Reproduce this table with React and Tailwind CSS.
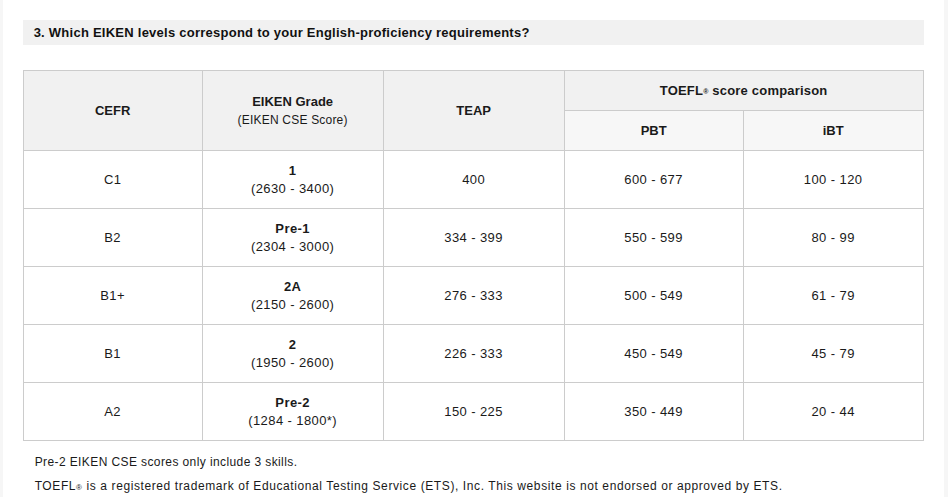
import React from "react";

const rows = [
  ["C1", "1", "(2630 - 3400)", "400", "600 - 677", "100 - 120"],
  ["B2", "Pre-1", "(2304 - 3000)", "334 - 399", "550 - 599", "80 - 99"],
  ["B1+", "2A", "(2150 - 2600)", "276 - 333", "500 - 549", "61 - 79"],
  ["B1", "2", "(1950 - 2600)", "226 - 333", "450 - 549", "45 - 79"],
  ["A2", "Pre-2", "(1284 - 1800*)", "150 - 225", "350 - 449", "20 - 44"],
];

export default function App() {
  const cell = "border border-[#cccccc] text-center align-middle p-0";
  return (
    <div
      className="flex w-[948px] h-[497px] bg-white text-[#1a1a1a]"
      style={{ fontFamily: '"Liberation Sans", Arial, sans-serif' }}
    >
      <div className="w-[3px] bg-[#f6f6f6]" />
      <div className="flex-1 pl-[20px] pr-[20px] pt-[20px]">
        <div className="h-[25px] bg-[#f1f1f1] flex items-center pl-[11px] text-[13px] font-bold tracking-[0.25px] text-[#111]">
          3. Which EIKEN levels correspond to your English-proficiency requirements?
        </div>
        <table className="mt-[25px] w-[900px] border-collapse table-fixed text-[13px]">
          <colgroup>
            <col className="w-[179px]" />
            <col className="w-[181px]" />
            <col className="w-[181px]" />
            <col className="w-[179px]" />
            <col className="w-[180px]" />
          </colgroup>
          <thead>
            <tr className="h-[40px] bg-[#f1f1f1]">
              <th rowSpan={2} className={`${cell} font-bold`}>CEFR</th>
              <th rowSpan={2} className={`${cell} font-normal`}>
                <div className="font-bold leading-[19px]">EIKEN Grade</div>
                <div className="text-[12px] leading-[18px] tracking-[0.2px]">(EIKEN CSE Score)</div>
              </th>
              <th rowSpan={2} className={`${cell} font-bold`}>TEAP</th>
              <th colSpan={2} className={`${cell} font-bold tracking-[0.2px]`}>
                TOEFL<sup className="text-[7px] relative -top-[1px]">®</sup> score comparison
              </th>
            </tr>
            <tr className="h-[40px] bg-[#f7f7f7]">
              <th className={`${cell} font-bold`}>PBT</th>
              <th className={`${cell} font-bold`}>iBT</th>
            </tr>
          </thead>
          <tbody className="tracking-[0.4px]">
            {rows.map((r) => (
              <tr key={r[0]} className="h-[58px]">
                <td className={cell}>{r[0]}</td>
                <td className={cell}>
                  <div className="font-bold leading-[18px]">{r[1]}</div>
                  <div className="leading-[18px]">{r[2]}</div>
                </td>
                <td className={cell}>{r[3]}</td>
                <td className={cell}>{r[4]}</td>
                <td className={cell}>{r[5]}</td>
              </tr>
            ))}
          </tbody>
        </table>
        <div className="pl-[12px] pt-[9px] text-[12px] leading-[24px]">
          <div className="tracking-[0.4px]">Pre-2 EIKEN CSE scores only include 3 skills.</div>
          <div className="tracking-[0.6px]">
            TOEFL<span className="text-[8px]">®</span> is a registered trademark of Educational Testing Service (ETS), Inc. This website is not endorsed or approved by ETS.
          </div>
        </div>
      </div>
      <div className="w-[5px] bg-[#f6f6f6]" />
    </div>
  );
}
